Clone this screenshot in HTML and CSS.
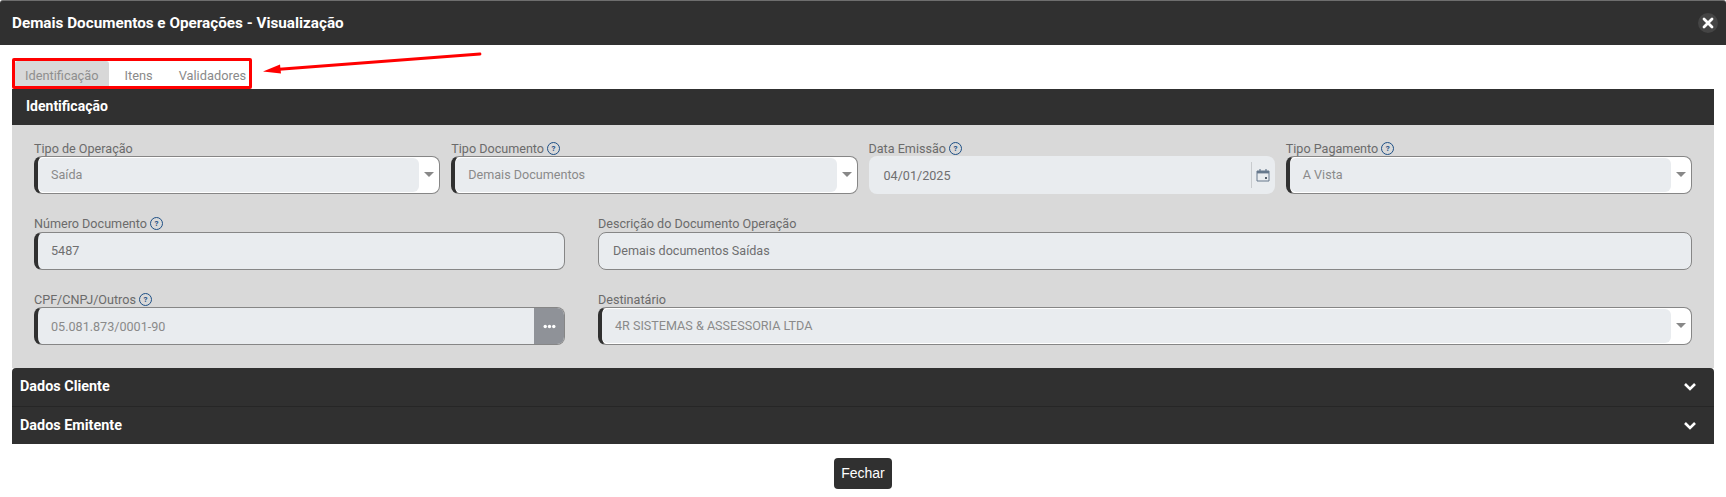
FILE: index.html
```html
<!DOCTYPE html>
<html lang="pt-BR">
<head>
    <meta charset="UTF-8">
    <meta name="viewport" content="width=device-width, initial-scale=1.0">
    <title>Demais Documentos e Operações - Visualização</title>
    <link rel="stylesheet" href="styles.css">
</head>
<body>
    <div class="modal-header">
        <h1>Demais Documentos e Operações - Visualização</h1>
        <button class="close-btn" type="button" aria-label="Fechar">
            <svg width="12" height="12" viewBox="0 0 12 12"><path d="M2 2l8 8M10 2l-8 8" stroke="#fff" stroke-width="2.8" stroke-linecap="round"/></svg>
        </button>
    </div>

    <div class="modal-body">
        <div class="tabs">
            <a class="tab active">Identificação</a>
            <a class="tab">Itens</a>
            <a class="tab">Validadores</a>
        </div>

        <!-- seta de destaque sobre a tela -->
        <svg class="callout-arrow" width="230" height="30" viewBox="0 0 230 30">
            <path d="M224 3L20 18.5" stroke="#f00" stroke-width="2.8" stroke-linecap="round"/>
            <path d="M7 20.5L24 13.5L25 22.5Z" fill="#f00"/>
        </svg>

        <div class="panel">
            <div class="panel-title">Identificação</div>
            <div class="panel-body">
                <div class="row row-four">
                    <div class="field">
                        <label>Tipo de Operação</label>
                        <div class="select required"><span class="value muted">Saída</span><i class="caret"></i></div>
                    </div>
                    <div class="field">
                        <label>Tipo Documento <span class="help">?</span></label>
                        <div class="select required"><span class="value muted">Demais Documentos</span><i class="caret"></i></div>
                    </div>
                    <div class="field">
                        <label>Data Emissão <span class="help">?</span></label>
                        <div class="date">
                            <span class="value">04/01/2025</span>
                            <span class="date-icon">
                                <svg width="14" height="14" viewBox="0 0 14 14" fill="none">
                                    <path d="M1 3h12v10H1z" stroke="#66788c" stroke-width="1"/>
                                    <path d="M1 3h12v2.4H1z" fill="#66788c"/>
                                    <path d="M4 1v2.5M10 1v2.5" stroke="#66788c" stroke-width="1.2"/>
                                    <path d="M9 9h2v2H9z" fill="#55606c"/>
                                </svg>
                            </span>
                        </div>
                    </div>
                    <div class="field">
                        <label>Tipo Pagamento <span class="help">?</span></label>
                        <div class="select required"><span class="value muted">A Vista</span><i class="caret"></i></div>
                    </div>
                </div>

                <div class="row row-two">
                    <div class="field">
                        <label>Número Documento <span class="help">?</span></label>
                        <div class="input required"><span class="value">5487</span></div>
                    </div>
                    <div class="field">
                        <label>Descrição do Documento Operação</label>
                        <div class="input"><span class="value">Demais documentos Saídas</span></div>
                    </div>
                </div>

                <div class="row row-two">
                    <div class="field">
                        <label>CPF/CNPJ/Outros <span class="help">?</span></label>
                        <div class="input required with-btn">
                            <span class="value muted">05.081.873/0001-90</span>
                            <span class="dots-btn">
                                <svg width="13" height="5" viewBox="0 0 13 5" fill="#fff"><circle cx="2.2" cy="2.5" r="1.7"/><circle cx="6.5" cy="2.5" r="1.7"/><circle cx="10.8" cy="2.5" r="1.7"/></svg>
                            </span>
                        </div>
                    </div>
                    <div class="field">
                        <label>Destinatário</label>
                        <div class="select required"><span class="value muted">4R SISTEMAS &amp; ASSESSORIA LTDA</span><i class="caret"></i></div>
                    </div>
                </div>
            </div>

            <div class="accordion first">
                <span>Dados Cliente</span>
                <svg width="14" height="9" viewBox="0 0 14 9" fill="none"><path d="M2 2l5 5 5-5" stroke="#fff" stroke-width="2.6"/></svg>
            </div>
            <div class="accordion">
                <span>Dados Emitente</span>
                <svg width="14" height="9" viewBox="0 0 14 9" fill="none"><path d="M2 2l5 5 5-5" stroke="#fff" stroke-width="2.6"/></svg>
            </div>
        </div>

        <div class="actions">
            <button class="btn-close" type="button">Fechar</button>
        </div>
    </div>
</body>
</html>
```

FILE: styles.css
```css
* {
    box-sizing: border-box;
}
body {
    margin: 0;
    font-family: Roboto, Arial, sans-serif;
    font-size: 12.6px;
    background-color: #fff;
}
.modal-header {
    display: flex;
    align-items: center;
    justify-content: space-between;
    height: 45px;
    padding: 0 8px 0 12px;
    background-color: #303030;
    border-top: 1px solid #6e6e6e;
    border-radius: 3px 3px 0 0;
}
.modal-header h1 {
    margin: 0;
    color: #fff;
    font-size: 15.25px;
    font-weight: 700;
}
.close-btn {
    display: flex;
    align-items: center;
    justify-content: center;
    width: 20px;
    height: 20px;
    padding: 0;
    border: 0;
    border-radius: 50%;
    background-color: #454545;
}
.modal-body {
    position: relative;
    padding: 13px 12px 0;
}
.tabs {
    display: inline-flex;
    vertical-align: top;
    gap: 6px;
    height: 31px;
    border: 3px solid #f00;
    border-radius: 2px;
    padding-right: 3px;
}
.tab {
    padding: 0 10px;
    line-height: 29px;
    font-size: 12.8px;
    color: #8a8a8a;
}
.tab:last-child {
    padding-right: 0;
}
.tab.active {
    background-color: #d8d8d8;
    border-radius: 3px 3px 0 0;
    height: 25px;
    color: #8f8f8f;
}
.callout-arrow {
    position: absolute;
    left: 256px;
    top: 6px;
}
.panel-title {
    height: 36px;
    padding-left: 14px;
    line-height: 35px;
    font-size: 14px;
    font-weight: 700;
    color: #fff;
    background-color: #303030;
}
.panel-body {
    display: flex;
    flex-direction: column;
    gap: 21.6px;
    padding: 15px 22px 23px;
    background-color: #d9d9d9;
}
.row {
    display: grid;
}
.row-four {
    grid-template-columns: repeat(4, 1fr);
    column-gap: 11px;
}
.row-two {
    grid-template-columns: 531px 1fr;
    column-gap: 33px;
}
.field label {
    display: flex;
    align-items: center;
    gap: 3px;
    height: 16px;
    color: #6b6b6b;
    white-space: nowrap;
}
.help {
    display: inline-block;
    width: 13px;
    height: 13px;
    border: 1.2px solid #1d4f85;
    border-radius: 50%;
    font-size: 8px;
    font-weight: 700;
    line-height: 11px;
    text-align: center;
    color: #1d4f85;
}
.select,
.input,
.date {
    display: flex;
    align-items: center;
    height: 38px;
    border-radius: 8px;
}
.select,
.input {
    border: 1px solid #868686;
}
.required {
    border-left: 4px solid #303030;
}
.select {
    background-color: #fff;
}
.select .value {
    flex: 1;
    align-self: stretch;
    display: flex;
    align-items: center;
    padding: 0 0 1px 13px;
    background-color: #e9ecef;
    border-radius: 6px;
    margin: 1px 0;
}
.caret {
    flex: none;
    width: 20px;
    margin: 0 0 1px;
    display: flex;
    justify-content: center;
}
.caret::after {
    content: "";
    border-left: 5px solid transparent;
    border-right: 5px solid transparent;
    border-top: 5px solid #888;
}
.input {
    padding-left: 14px;
    background-color: #e9ecef;
    overflow: hidden;
}
.input.required {
    padding-left: 13px;
}
.value {
    color: #6f6f6f;
}
.value.muted {
    color: #8a8a8a;
}
.with-btn {
    padding-right: 0;
}
.with-btn .value {
    flex: 1;
}
.dots-btn {
    display: flex;
    align-items: center;
    justify-content: center;
    align-self: stretch;
    width: 30px;
    background-color: #8f9298;
}
.date {
    padding: 0 5px 0 15px;
    background-color: #e9ecef;
}
.date .value {
    flex: 1;
}
.date-icon {
    display: flex;
    align-items: center;
    height: 26px;
    padding-left: 4px;
    border-left: 1px solid #c8cbce;
}
.accordion {
    display: flex;
    align-items: center;
    justify-content: space-between;
    height: 37px;
    padding: 0 17px 0 8px;
    font-size: 14.4px;
    font-weight: 700;
    color: #fff;
    background-color: #303030;
}
.accordion.first {
    height: 39px;
    padding-bottom: 2px;
    border-bottom: 1px solid #262626;
    border-radius: 4px 4px 0 0;
}
.actions {
    display: flex;
    justify-content: center;
    padding-top: 14px;
}
.btn-close {
    width: 58px;
    height: 31px;
    padding: 0 0 2px;
    border: 0;
    border-radius: 4px;
    font-family: "Liberation Sans", Arial, sans-serif;
    font-size: 14px;
    color: #fff;
    background-color: #303030;
}
```
